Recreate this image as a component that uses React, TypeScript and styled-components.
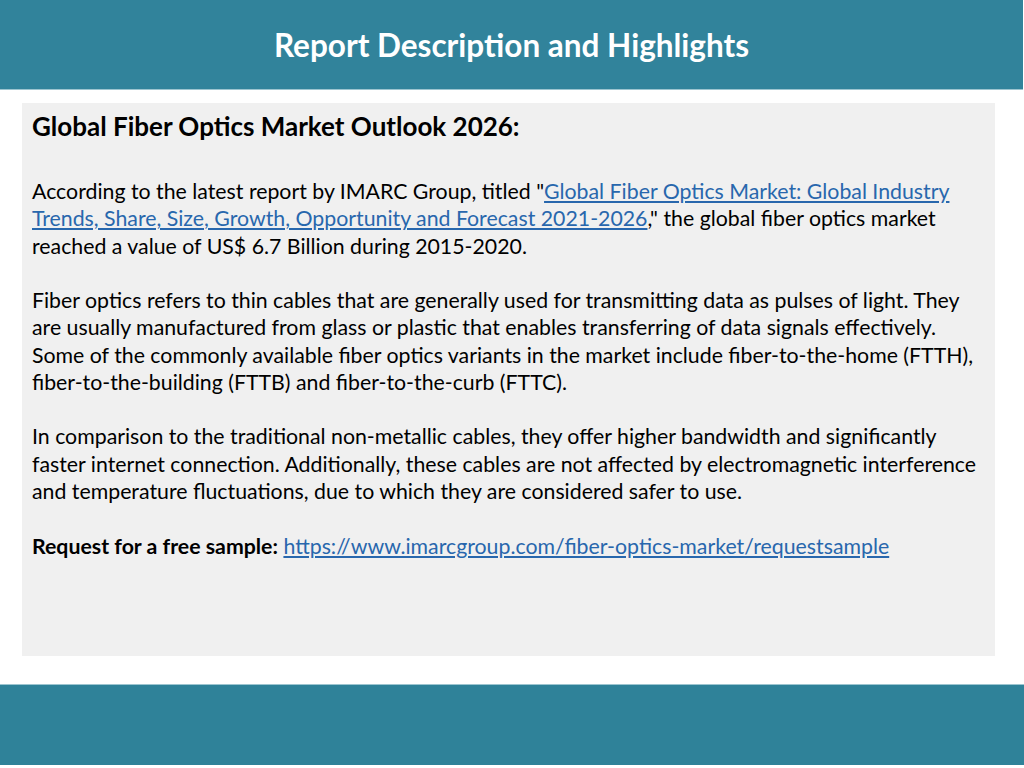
import React from "react";
import styled, { createGlobalStyle } from "styled-components";

const Global = createGlobalStyle`
  html, body { margin: 0; padding: 0; background: #ffffff; }
  body { font-family: "Lato", "Open Sans", sans-serif; }
`;

const Page = styled.div`
  width: 1024px;
  height: 768px;
  display: flex;
  flex-direction: column;
  background: #ffffff;
  overflow: hidden;
`;

const Header = styled.header`
  height: 90px;
  margin-right: 1px;
  background: #31839b;
  border-bottom: 1px solid #9cc5d0;
  display: flex;
  align-items: center;
  justify-content: center;
  box-sizing: border-box;
`;

const HeaderTitle = styled.h1`
  margin: 0;
  color: #ffffff;
  font-family: "Lato", "Open Sans", sans-serif;
  font-weight: 700;
  font-size: 31.5px;
`;

const Main = styled.main`
  padding: 13px 29px 0 22px;
`;

const Panel = styled.section`
  height: 553px;
  box-sizing: border-box;
  background: #f0f0f0;
  padding: 9px 16px 0 10px;
  color: #000000;
  font-size: 21.3px;
  line-height: 27.3px;
`;

const Title = styled.h2`
  margin: 0 0 38px 0;
  font-size: 26px;
  font-weight: 700;
  line-height: 28px;
`;

const Para = styled.p`
  margin: 0 0 27.2px 0;
`;

const Link = styled.a`
  color: #2867ad;
  text-decoration: underline;
  text-underline-offset: 2px;
`;

const Strong = styled.strong`
  font-weight: 700;
`;

const Footer = styled.footer`
  margin-top: 28px;
  height: 81px;
  background: #2f8299;
  border-top: 1px solid #9cc5d0;
  box-sizing: border-box;
`;

export default function App() {
  return (
    <>
      <Global />
      <Page>
        <Header>
          <HeaderTitle>Report Description and Highlights</HeaderTitle>
        </Header>
        <Main>
          <Panel>
            <Title>Global Fiber Optics Market Outlook 2026:</Title>
            <Para>
              According to the latest report by IMARC Group, titled "
              <Link href="#">
                Global Fiber Optics Market: Global Industry Trends, Share, Size, Growth, Opportunity and Forecast
                2021-2026
              </Link>
              ," the global fiber optics market reached a value of US$ 6.7 Billion during 2015-2020.
            </Para>
            <Para>
              Fiber optics refers to thin cables that are generally used for transmitting data as pulses of light.
              They are usually manufactured from glass or plastic that enables transferring of data signals
              effectively. Some of the commonly available fiber optics variants in the market include
              fiber-to-the-home (FTTH), fiber-to-the-building (FTTB) and fiber-to-the-curb (FTTC).
            </Para>
            <Para>
              In comparison to the traditional non-metallic cables, they offer higher bandwidth and significantly
              faster internet connection. Additionally, these cables are not affected by electromagnetic
              interference and temperature fluctuations, due to which they are considered safer to use.
            </Para>
            <Para>
              <Strong>Request for a free sample:</Strong>{" "}
              <Link href="#">https://www.imarcgroup.com/fiber-optics-market/requestsample</Link>
            </Para>
          </Panel>
        </Main>
        <Footer />
      </Page>
    </>
  );
}
